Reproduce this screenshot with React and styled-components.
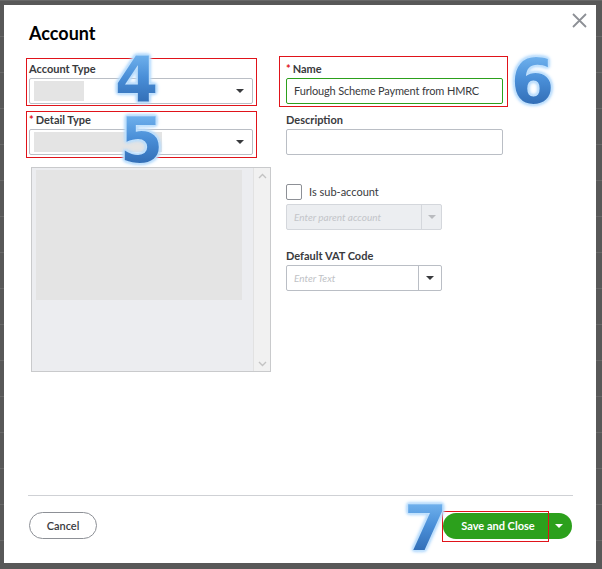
import React from "react";
import styled, { createGlobalStyle } from "styled-components";

/* --- Global --- */
const GlobalStyle = createGlobalStyle`
  html, body {
    margin: 0;
    padding: 0;
    background: #585858;
  }
  * {
    box-sizing: border-box;
  }
`;

const colors = {
  text: "#393a3d",
  red: "#e0131a",
  green: "#2ca01c",
  border: "#babec5",
  muted: "#8d9096",
  grey: "#e4e4e4",
};

/* --- Styles --- */
const Page = styled.div`
  position: relative;
  width: 602px;
  height: 569px;
  padding: 5px 6px 6px 4px;
  font-family: Lato, "Open Sans", sans-serif;
  color: ${colors.text};
  background-color: #585858;
  background-image: repeating-linear-gradient(
    to bottom,
    #686868 0px,
    #686868 1px,
    transparent 1px,
    transparent 36px
  );
  overflow: hidden;
`;

const Modal = styled.div`
  width: 592px;
  height: 558px;
  background: #fff;
  display: flex;
  flex-direction: column;
  padding: 0 23px 24px 24px;
`;

const Header = styled.div`
  display: flex;
  justify-content: space-between;
  align-items: flex-start;
  padding-top: 8px;
  margin-right: -14px;
`;

const Title = styled.h1`
  margin: 9px 0 0 1px;
  font-size: 18px;
  line-height: 22px;
  font-weight: 700;
  color: #000;
`;

const CloseButton = styled.button`
  width: 15px;
  height: 15px;
  padding: 0;
  border: none;
  background: none;
  cursor: pointer;
  display: flex;
`;

const Body = styled.div`
  display: grid;
  grid-template-columns: 244px 1fr;
  column-gap: 9px;
  margin: 12px 0 0 -2px;
`;

const Column = styled.div`
  display: flex;
  flex-direction: column;
  align-items: flex-start;
  padding-top: ${(p) => p.$offset || 0}px;
`;

const FieldBox = styled.div`
  border: 1px solid ${(p) => (p.$highlight ? colors.red : "transparent")};
  padding: ${(p) => p.$pad};
  margin-top: ${(p) => p.$top || 0}px;
  display: flex;
  flex-direction: column;
`;

const Label = styled.label`
  font-size: 11px;
  line-height: 16px;
  font-weight: 700;
  color: ${colors.text};
  margin-bottom: 1px;
  display: flex;
  align-items: center;
`;

const Required = styled.span`
  color: ${colors.red};
  margin-right: 2px;
  font-weight: 700;
`;

const SelectBox = styled.div`
  width: ${(p) => p.$width}px;
  height: 26px;
  border: 1px solid ${colors.border};
  border-radius: 2px;
  display: flex;
  align-items: center;
  justify-content: space-between;
  padding: 0 8px 0 4px;
`;

const Redacted = styled.div`
  width: ${(p) => p.$width}px;
  height: 20px;
  background: ${colors.grey};
`;

const TextInput = styled.div`
  width: ${(p) => p.$width}px;
  height: 26px;
  border: 1px solid ${(p) => (p.$active ? colors.green : colors.border)};
  border-radius: 2px;
  padding: 0 7px;
  font-size: 11px;
  line-height: 24px;
  letter-spacing: -0.15px;
  color: ${colors.text};
  white-space: nowrap;
`;

const Caret = styled.span`
  width: 0;
  height: 0;
  border-left: 4px solid transparent;
  border-right: 4px solid transparent;
  border-top: 4px solid ${(p) => p.$color || colors.text};
`;

const ListPanel = styled.div`
  margin: 9px 0 0 5px;
  width: 240px;
  height: 205px;
  border: 1px solid #c9cacc;
  background: #ecedf0;
  display: flex;
`;

const ListArea = styled.div`
  flex: 1;
  padding: 2px 4px;
`;

const ListPlaceholder = styled.div`
  width: 206px;
  height: 130px;
  background: ${colors.grey};
`;

const ScrollBar = styled.div`
  width: 17px;
  background: #f1f1f1;
  border-left: 1px solid #e2e2e2;
  display: flex;
  flex-direction: column;
  justify-content: space-between;
  align-items: center;
  padding: 5px 0 4px;
`;

const CheckRow = styled.div`
  display: flex;
  align-items: center;
  gap: 7px;
  margin: 26px 0 0 7px;
  font-size: 11px;
  line-height: 16px;
  color: ${colors.text};
`;

const CheckBox = styled.span`
  width: 16px;
  height: 16px;
  border: 1px solid #8d9096;
  border-radius: 2px;
  background: #fff;
`;

const Combo = styled.div`
  width: 156px;
  height: 26px;
  margin: ${(p) => p.$margin};
  border: 1px solid ${(p) => (p.$disabled ? "#d4d7dc" : colors.border)};
  border-radius: 2px;
  background: ${(p) => (p.$disabled ? "#eceef1" : "#fff")};
  display: flex;
`;

const ComboText = styled.div`
  flex: 1;
  padding: 0 7px;
  font-size: 10px;
  line-height: 24px;
  font-style: italic;
  color: ${(p) => (p.$disabled ? "#c3c5c9" : "#c0c2c6")};
`;

const ComboButton = styled.div`
  width: ${(p) => p.$width}px;
  border-left: 1px solid ${(p) => (p.$disabled ? "#d4d7dc" : colors.border)};
  display: flex;
  align-items: center;
  justify-content: center;
`;

const PlainField = styled.div`
  margin: ${(p) => p.$margin};
  display: flex;
  flex-direction: column;
`;

const Footer = styled.div`
  margin-top: auto;
  display: flex;
  flex-direction: column;
`;

const Divider = styled.div`
  height: 1px;
  background: #cfd1d5;
`;

const ButtonRow = styled.div`
  margin-top: 16px;
  display: flex;
  justify-content: space-between;
  align-items: center;
`;

const CancelButton = styled.button`
  margin-left: 1px;
  width: 68px;
  height: 27px;
  border: 1px solid ${colors.muted};
  border-radius: 14px;
  background: #fff;
  font-family: inherit;
  font-size: 11px;
  font-weight: 600;
  color: ${colors.text};
  cursor: pointer;
`;

const SplitButton = styled.div`
  display: flex;
  height: 26px;
  margin-right: 1px;
`;

const PrimaryButton = styled.button`
  position: relative;
  width: 106px;
  height: 100%;
  border: none;
  border-radius: 13px 0 0 13px;
  background: ${colors.green};
  color: #fff;
  font-family: inherit;
  font-size: 11px;
  font-weight: 700;
  padding: 0 0 0 4px;
  cursor: pointer;

  /* annotation frame drawn over the button */
  &::after {
    content: "";
    display: ${(p) => (p.$highlight ? "block" : "none")};
    position: absolute;
    left: -1px;
    top: -2px;
    right: 0;
    bottom: -3px;
    border: 1px solid ${colors.red};
  }
`;

const MenuButton = styled.button`
  width: 23px;
  height: 100%;
  border: none;
  border-radius: 0 13px 13px 0;
  background: ${colors.green};
  display: flex;
  align-items: center;
  justify-content: center;
  padding: 0 4px 0 0;
  cursor: pointer;
`;

const Callout = styled.span`
  position: absolute;
  left: ${(p) => p.$x}px;
  top: ${(p) => p.$y}px;
  font-family: "DejaVu Sans", sans-serif;
  font-weight: 700;
  font-size: 62px;
  line-height: 1;
  color: transparent;
  background: linear-gradient(180deg, #78b9f2 0%, #4a8fd8 45%, #2a63ab 100%);
  -webkit-background-clip: text;
  background-clip: text;
  filter: drop-shadow(0 0 1px #e2f2ff) drop-shadow(0 0 1px #b3dafd)
    drop-shadow(0 0 1px #a3d1fb) drop-shadow(0 0 1.5px #bfe0fd);
  pointer-events: none;
`;

/* --- Small drawings --- */
const CloseIcon = () => (
  <svg width="15" height="15" viewBox="0 0 15 15">
    <path d="M1 1 L14 14 M14 1 L1 14" stroke="#8d9096" strokeWidth="1.8" fill="none" />
  </svg>
);

const Chevron = ({ up }) => (
  <svg width="9" height="6" viewBox="0 0 9 6">
    <path
      d={up ? "M1 5 L4.5 1.5 L8 5" : "M1 1 L4.5 4.5 L8 1"}
      stroke="#c3c3c3"
      strokeWidth="1.4"
      fill="none"
    />
  </svg>
);

/* --- Component --- */
export default function App() {
  return (
    <>
      <GlobalStyle />
      <Page>
        <Modal>
          <Header>
            <Title>Account</Title>
            <CloseButton aria-label="Close">
              <CloseIcon />
            </CloseButton>
          </Header>

          <Body>
            <Column $offset={2}>
              <FieldBox $highlight $pad="2px 3px 1px 2px">
                <Label>Account Type</Label>
                <SelectBox $width={224}>
                  <Redacted $width={50} />
                  <Caret />
                </SelectBox>
              </FieldBox>

              <FieldBox $highlight $pad="0 3px 2px 2px" $top={5}>
                <Label>
                  <Required>*</Required>Detail Type
                </Label>
                <SelectBox $width={224}>
                  <Redacted $width={128} />
                  <Caret />
                </SelectBox>
              </FieldBox>

              <ListPanel>
                <ListArea>
                  <ListPlaceholder />
                </ListArea>
                <ScrollBar>
                  <Chevron up />
                  <Chevron />
                </ScrollBar>
              </ListPanel>
            </Column>

            <Column>
              <FieldBox $highlight $pad="4px 4px 2px 6px">
                <Label>
                  <Required>*</Required>Name
                </Label>
                <TextInput $width={217} $active>
                  Furlough Scheme Payment from HMRC
                </TextInput>
              </FieldBox>

              <FieldBox $pad="4px 4px 2px 6px">
                <Label>Description</Label>
                <TextInput $width={217} />
              </FieldBox>

              <CheckRow>
                <CheckBox />
                Is sub-account
              </CheckRow>

              <Combo $disabled $margin="4px 0 0 7px">
                <ComboText $disabled>Enter parent account</ComboText>
                <ComboButton $disabled $width={20}>
                  <Caret $color="#b9bbbf" />
                </ComboButton>
              </Combo>

              <PlainField $margin="18px 0 0 7px">
                <Label>Default VAT Code</Label>
                <Combo $margin="0">
                  <ComboText>Enter Text</ComboText>
                  <ComboButton $width={23}>
                    <Caret />
                  </ComboButton>
                </Combo>
              </PlainField>
            </Column>
          </Body>

          <Footer>
            <Divider />
            <ButtonRow>
              <CancelButton>Cancel</CancelButton>
              <SplitButton>
                <PrimaryButton $highlight>Save and Close</PrimaryButton>
                <MenuButton aria-label="More">
                  <Caret $color="#fff" />
                </MenuButton>
              </SplitButton>
            </ButtonRow>
          </Footer>
        </Modal>

        <Callout $x={115} $y={49}>4</Callout>
        <Callout $x={120} $y={110}>5</Callout>
        <Callout $x={511} $y={51}>6</Callout>
        <Callout $x={404} $y={498}>7</Callout>
      </Page>
    </>
  );
}
